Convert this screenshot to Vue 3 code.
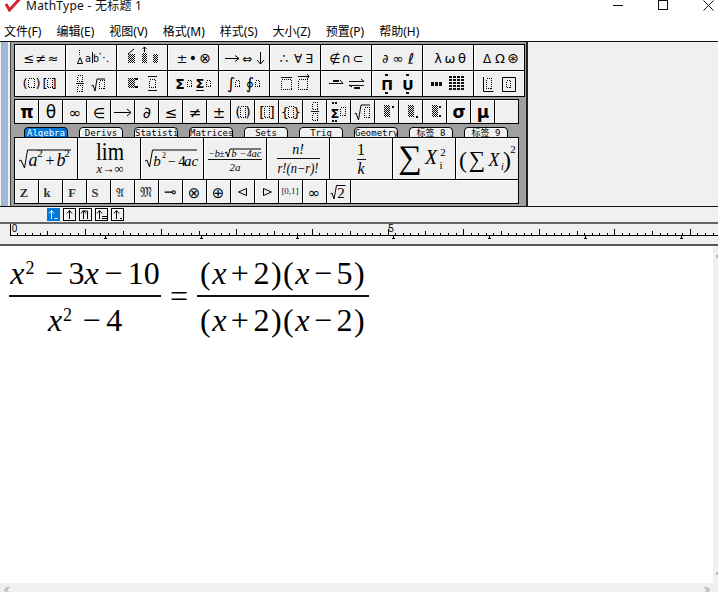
<script setup>
const T = (x, y, s, c = 'sym', fs = 13) => ({ x, y, s, c, fs })
const D = (x, y, w, h) => ({ x: x + 0.5, y: y + 0.5, w: w - 1, h: h - 1 })
const F = (x, y, w, h) => ({ x, y, w, h })
const ic = (t = [], d = [], f = [], p = '', g = []) => ({ t, d, f, p, g })

const row1 = [
  ic([T(14, 18, '≤'), T(26, 18, '≠'), T(38, 18, '≈')]),
  ic([T(22, 17, 'a', 'mono', 10), T(30, 17, 'b', 'mono', 10), T(38, 16, '⋱', 'sym', 11)], [], [F(13, 5, 1, 1), F(13, 7, 1, 1), F(13, 9, 1, 1)], 'M11.5 18.5h5l-2.500-6zM26.500 7v11'),
  ic([], [], [], 'M11 9l6-5M27.500 7V2M25.500 4l2-2 2 2', [F(11, 9, 7, 9), F(25, 8, 5, 10), F(36, 9, 5, 9)]),
  ic([T(14, 18, '±'), T(25, 18, '•', 'sym', 14), T(37, 18, '⊗', 'sym', 14)]),
  ic([T(28, 18, '⇔', 'sym', 12)], [], [], 'M6 13.500h14M16 10.500l4 3-4 3M41.500 7v12M38 15l3.500 4 3.500-4'),
  ic([T(14, 18, '∴'), T(28, 18, '∀', 'sym', 12), T(39, 18, '∃', 'sym', 12)]),
  ic([T(14, 18, '∉'), T(25, 18, '∩'), T(37, 18, '⊂')]),
  ic([T(13, 18, '∂', 'sym', 12), T(26, 18, '∞'), T(39, 19, 'ℓ', 'sym', 15)]),
  ic([T(15, 18, 'λ'), T(27, 18, 'ω'), T(39, 18, 'θ')]),
  ic([T(13, 18, 'Δ', 'sym', 12), T(26, 18, 'Ω'), T(39, 18, '⊛', 'sym', 14)]),
]
const row2 = [
  ic([T(10, 17, '(', 'sym', 13), T(23, 17, ')', 'sym', 13), T(30, 17, '[', 'sym', 13), T(39, 17, ']', 'sym', 13)], [D(13, 7, 7, 10), D(32, 7, 6, 10)]),
  ic([], [D(11, 4, 6, 7), D(11, 14, 6, 7), D(33, 9, 6, 9)], [F(10, 12, 8, 1)], 'M25.500 15l1.500-1 2 6 2-12h8'),
  ic([], [D(32, 8, 7, 9)], [F(31, 5, 9, 1), F(31, 19, 9, 1), F(18, 7, 3, 2), F(18, 15, 3, 2)], '', [F(11, 7, 7, 10)]),
  ic([T(12, 18, 'Σ', 'bsym', 14), T(32, 17, 'Σ', 'bsym', 13)], [D(19, 9, 5, 7), D(38, 9, 5, 7)], [F(28, 19, 8, 1)]),
  ic([T(12, 18, '∫', 'sym', 16), T(31, 18, '∮', 'sym', 16)], [D(16, 9, 5, 7), D(36, 9, 5, 7)]),
  ic([], [D(11, 8, 11, 11), D(28, 8, 10, 11)], [F(11, 6, 11, 1), F(28, 5, 11, 1)], 'M37 3l2 2.500-2 2.500'),
  ic([], [], [F(8, 12, 14, 1), F(28, 10, 15, 1), F(28, 14, 15, 1), F(12, 9, 6, 2), F(33, 16, 6, 2)], 'M19 9l3 3.500M40 8l3 2.500M31 16l-3-2'),
  ic([T(15, 19, 'Π', 'bsym', 14), T(36, 19, 'U', 'bsym', 14)], [], [F(13, 3, 3, 2), F(13, 21, 3, 2), F(34, 3, 3, 2), F(34, 21, 3, 2)]),
  ic([], [], [
    F(8, 11, 3, 4), F(12, 11, 3, 4), F(16, 11, 3, 4),
    ...[0, 1, 2, 3, 4].flatMap(r => [0, 1, 2, 3].map(c => F(26 + c * 4, 5 + r * 3, 3, 2))),
  ]),
  ic([], [D(12, 7, 6, 11), D(32, 9, 5, 8)], [], 'M9.500 6v14.500h10M28.500 6.500h13v14h-13z'),
]
const row3 = [
  ['π', 'bsym', 17], ['θ', 'sym', 17], ['∞', 'sym', 15], ['∈', 'sym', 14],
].map(([s, c, f]) => ic([T(12, 18, s, c, f)])).concat([
  ic([], [], [], 'M3 12.500h17M16 9l4 3.500-4 3.500'),
], [
  ['∂', 'sym', 16], ['≤', 'sym', 15], ['≠', 'sym', 15], ['±', 'sym', 15],
].map(([s, c, f]) => ic([T(12, 18, s, c, f)])), [
  ic([T(7, 17, '(', 'sym', 14), T(17, 17, ')', 'sym', 14)], [D(9, 6, 6, 12)]),
  ic([T(7, 17, '[', 'sym', 14), T(17, 17, ']', 'sym', 14)], [D(9, 6, 6, 12)]),
  ic([T(6, 17, '{', 'sym', 13), T(18, 17, '}', 'sym', 13)], [D(9, 6, 6, 12)]),
  ic([], [D(9, 2, 6, 8), D(9, 13, 6, 8)], [F(8, 11, 8, 1)]),
  ic([T(8, 18, 'Σ', 'bsym', 13)], [D(13, 7, 6, 9)], [F(5, 2, 2, 2), F(8, 2, 2, 2), F(5, 20, 2, 2), F(8, 20, 2, 2)]),
  ic([], [D(13, 7, 6, 11)], [], 'M3.500 14l1.500-1 2.500 7 2.500-15h9'),
  ic([], [], [F(17, 6, 2, 2)], '', [F(9, 5, 6, 12)]),
  ic([], [], [F(17, 16, 2, 2)], '', [F(9, 5, 6, 12)]),
  ic([], [], [F(16, 6, 2, 2), F(16, 15, 2, 2)], '', [F(9, 5, 6, 12)]),
  ic([T(12, 18, 'σ', 'bsym', 17)]),
  ic([T(12, 18, 'μ', 'bsym', 17)]),
  ic(),
])
const tabs = ['Algebra', 'Derivs', 'Statisti', 'Matrices', 'Sets', 'Trig', 'Geometry', '标签 8', '标签 9']

const row5 = [
  ic([T(9, 17, 'Z', 'bser', 12.500)]), ic([T(8, 17, 'k', 'bser', 12.500)]), ic([T(9, 17, 'F', 'bser', 12.500)]), ic([T(8, 17, 'S', 'bser', 12.500)]),
  ic([T(9, 17, '𝔄', 'ser', 12)]), ic([T(11, 17, '𝔐', 'ser', 13)]),
  ic([T(11, 17, '⊸', 'sym', 15)]), ic([T(11, 18, '⊗', 'sym', 15)]), ic([T(11, 18, '⊕', 'sym', 15)]),
  ic([], [], [], 'M15.500 8.500v7l-8-3.500z'), ic([], [], [], 'M8.500 8.500v7l8-3.500z'),
  ic([T(11, 14, '[0,1]', 'ser1', 9)]), ic([T(11, 18, '∞', 'sym', 15)]),
  ic([T(14, 18, '2', 'mn', 15)], [], [], 'M3.500 14l1.500-1 2 6 2.500-13.500h9'),
]

const ticks = ['M10 11.500h708']
for (let i = 0; i * 7.56 + 9.5 < 718; i++) {
  const x = Math.round(9.5 + i * 7.56) + 0.5
  const h = i === 0 ? 11 : i % 10 === 0 ? 6 : i % 5 === 0 ? 4 : 2
  ticks.push(`M${x} 11v-${h}`)
}
const stops = []
for (let x = 105; x < 718; x += 96) stops.push(`M${x + 0.5} 12v2M${x - 1} 14.5h3`)
const rulerPath = ticks.join('') + stops.join('')
</script>

<template>
  <div class="app">
    <svg class="defs" width="0" height="0">
      <pattern id="dith" width="2" height="2" patternUnits="userSpaceOnUse">
        <rect width="1" height="1" fill="#000" />
        <rect x="1" y="1" width="1" height="1" fill="#000" />
      </pattern>
    </svg>
    <header class="titlebar">
      <svg class="logo" width="20" height="12" viewBox="0 0 20 12"><path d="M3 4l3.500 6 10-11" fill="none" stroke="#d3252f" stroke-width="3"/></svg>
      <span class="title">MathType - 无标题 1</span>
      <span class="controls">
        <svg width="10" height="11"><path d="M0 5.500h10" stroke="#111"/></svg>
        <svg width="10" height="11"><rect x=".5" y=".5" width="9" height="9" fill="none" stroke="#111"/></svg>
        <svg width="11" height="11"><path d="M.5 .5l10 10M10.500 .5l-10 10" stroke="#111"/></svg>
      </span>
    </header>
    <nav class="menubar">
      <span>文件(F)</span><span>编辑(E)</span><span>视图(V)</span><span>格式(M)</span><span>样式(S)</span><span>大小(Z)</span><span>预置(P)</span><span>帮助(H)</span>
    </nav>

    <section class="toolbar">
      <div class="strip"></div>
      <div class="palette">
        <div class="grid g51">
          <div v-for="(b, i) in [...row1, ...row2]" :key="i" class="btn">
            <svg width="50" height="25">
              <rect v-for="(r, j) in b.g" :key="'g' + j" :x="r.x" :y="r.y" :width="r.w" :height="r.h" class="gray" />
              <rect v-for="(r, j) in b.f" :key="'f' + j" :x="r.x" :y="r.y" :width="r.w" :height="r.h" class="solid" />
              <rect v-for="(r, j) in b.d" :key="'d' + j" :x="r.x" :y="r.y" :width="r.w" :height="r.h" class="dot" />
              <path v-if="b.p" :d="b.p" class="line" />
              <text v-for="(t, j) in b.t" :key="'t' + j" :x="t.x" :y="t.y" :class="t.c" :font-size="t.fs">{{ t.s }}</text>
            </svg>
          </div>
        </div>
        <div class="grid g24 r3">
          <div v-for="(b, i) in row3" :key="i" class="btn">
            <svg width="23" height="24">
              <rect v-for="(r, j) in b.g" :key="'g' + j" :x="r.x" :y="r.y" :width="r.w" :height="r.h" class="gray" />
              <rect v-for="(r, j) in b.f" :key="'f' + j" :x="r.x" :y="r.y" :width="r.w" :height="r.h" class="solid" />
              <rect v-for="(r, j) in b.d" :key="'d' + j" :x="r.x" :y="r.y" :width="r.w" :height="r.h" class="dot" />
              <path v-if="b.p" :d="b.p" class="line" />
              <text v-for="(t, j) in b.t" :key="'t' + j" :x="t.x" :y="t.y" :class="t.c" :font-size="t.fs">{{ t.s }}</text>
            </svg>
          </div>
        </div>
        <div class="tabs">
          <div v-for="(t, i) in tabs" :key="t" class="tab" :class="{ active: i === 0 }"><span>{{ t }}</span></div>
        </div>
        <div class="grid g63">
          <div class="btn tpl"><svg width="62" height="41">
            <path d="M4 23l2-1 3.500 8 3-18h43.500" class="line" />
            <text x="18" y="28" class="mi" font-size="18">a</text><text x="25" y="19" class="mn" font-size="11">2</text>
            <text x="35" y="28" class="mn" font-size="16">+</text><text x="46" y="28" class="mi" font-size="18">b</text><text x="52" y="19" class="mn" font-size="11">2</text>
          </svg></div>
          <div class="btn tpl"><svg width="62" height="41">
            <text x="32" y="22" class="mn" font-size="25" textLength="28" lengthAdjust="spacingAndGlyphs">lim</text>
            <text x="32" y="35" class="mi" font-size="13" textLength="27" lengthAdjust="spacingAndGlyphs">x→∞</text>
          </svg></div>
          <div class="btn tpl"><svg width="62" height="41">
            <path d="M4 23l2-1 2.500 7 3-17h44.500" class="line" />
            <text x="16" y="28" class="mi" font-size="15">b</text><text x="23" y="20" class="mn" font-size="8">2</text>
            <text x="31" y="28" class="mn" font-size="14">−</text><text x="41" y="28" class="mn" font-size="15">4</text><text x="50" y="28" class="mi" font-size="15">ac</text>
          </svg></div>
          <div class="btn tpl"><svg width="62" height="41">
            <path d="M21 15l1.500-1 1.500 5 2-8h31" class="line" />
            <text x="10" y="19" class="mi" font-size="10">−b</text>
            <text x="18" y="19" class="mn" font-size="10">±</text>
            <text x="30" y="19" class="mi" font-size="10">b</text>
            <text x="39" y="19" class="mn" font-size="10">−</text>
            <text x="50" y="19" class="mi" font-size="10">4ac</text>
            <rect x="4" y="21" width="54" height="1" class="solid" />
            <text x="31" y="33" class="mi" font-size="11">2a</text>
          </svg></div>
          <div class="btn tpl"><svg width="62" height="41">
            <text x="31" y="16" class="mi" font-size="14">n!</text>
            <rect x="10" y="20" width="43" height="1" class="solid" />
            <text x="31" y="35" class="mi" font-size="14" textLength="41" lengthAdjust="spacingAndGlyphs">r!(n−r)!</text>
          </svg></div>
          <div class="btn tpl"><svg width="62" height="41">
            <text x="31" y="17" class="mn" font-size="16">1</text>
            <rect x="27" y="21" width="9" height="1" class="solid" />
            <text x="31" y="36" class="mi" font-size="16">k</text>
          </svg></div>
          <div class="btn tpl"><svg width="62" height="41">
            <text x="17" y="30" class="mn" font-size="33">∑</text>
            <text x="38" y="26" class="mi" font-size="20">X</text>
            <text x="50" y="18" class="mn" font-size="11">2</text><text x="48" y="31" class="mn" font-size="11">i</text>
          </svg></div>
          <div class="btn tpl"><svg width="62" height="41">
            <text x="7" y="30" class="mn" font-size="24">(</text>
            <text x="21" y="29" class="mn" font-size="23">∑</text>
            <text x="38" y="28" class="mi" font-size="18">X</text>
            <text x="46.500" y="32" class="mi" font-size="10">i</text>
            <text x="51" y="30" class="mn" font-size="24">)</text>
            <text x="57" y="15" class="mn" font-size="11">2</text>
          </svg></div>
        </div>
        <div class="grid g24 r5">
          <div v-for="(b, i) in row5" :key="i" class="btn">
            <svg width="23" height="23">
              <path v-if="b.p" :d="b.p" class="line" />
              <text v-for="(t, j) in b.t" :key="'t' + j" :x="t.x" :y="t.y" :class="t.c" :font-size="t.fs">{{ t.s }}</text>
            </svg>
          </div>
          <div class="btn wide"></div>
        </div>
      </div>
      <div class="toolrest"></div>
    </section>

    <div class="sizes">
      <span class="nudge on"><svg width="11" height="11"><path d="M3.500 10V2M1 4.500l2.500-3 2.500 3M6.500 9.500h3" fill="none" stroke="#fff"/></svg></span>
      <span class="nudge"><svg width="11" height="11"><path d="M5.500 10V2M3 4.500l2.500-3 2.500 3" fill="none" stroke="#000"/></svg></span>
      <span class="nudge"><svg width="11" height="11"><path d="M3.500 10V2h4M1 4.500l2.500-3 2.500 3M7.500 2v8" fill="none" stroke="#000"/></svg></span>
      <span class="nudge"><svg width="11" height="11"><path d="M3.500 10V2M1 4.500l2.500-3 2.500 3M6 7.500h5M6 9.500h5" fill="none" stroke="#000"/></svg></span>
      <span class="nudge"><svg width="11" height="11"><path d="M4.500 10V2M2 4.500l2.500-3 2.500 3M8 9.500h2" fill="none" stroke="#000"/></svg></span>
    </div>

    <div class="ruler">
      <svg width="718" height="20">
        <path :d="rulerPath" class="line" />
        <text x="14.500" y="7.500" class="rnum" font-size="10">0</text>
        <text x="391" y="7.500" class="rnum" font-size="10">5</text>
      </svg>
    </div>

    <div class="editor">
      <main class="doc">
        <div class="math">
          <div class="frac f1">
            <div class="num"><i>x</i><sup>2</sup><b>−</b>3<i>x</i><b>−</b>10</div>
            <div class="den"><i>x</i><sup>2</sup><b>−</b>4</div>
          </div>
          <span class="eq">=</span>
          <div class="frac f2">
            <div class="num">(<i>x</i><b class="t">+</b>2)(<i>x</i><b class="t">−</b>5)</div>
            <div class="den">(<i>x</i><b class="t">+</b>2)(<i>x</i><b class="t">−</b>2)</div>
          </div>
        </div>
      </main>
      <aside class="vscroll"><span class="mark"></span><span class="mark"></span></aside>
    </div>
    <footer class="hscroll">
      <svg width="8" height="9"><path d="M6.500 4l-3 3 2 2M4.500 4l-3 3 2 2" fill="none" stroke="#bbb" stroke-width="1.2"/></svg>
      <svg width="8" height="9"><path d="M1.500 4l3 3-2 2M3.500 4l3 3-2 2" fill="none" stroke="#bbb" stroke-width="1.2"/></svg>
    </footer>
  </div>
</template>

<style scoped>
.app { width: 718px; height: 592px; overflow: hidden; display: flex; flex-direction: column; background: #fff; color: #000; font-family: "Noto Sans", "Noto Sans CJK SC", sans-serif; position: relative; }
.defs { position: absolute; }
.titlebar { height: 20px; flex: none; display: flex; align-items: flex-start; }
.logo { margin-left: 3px; flex: none; }
.title { margin-left: 3px; font-size: 12px; line-height: 12px; letter-spacing: .25px; color: #111; }
.controls { margin-left: auto; display: flex; align-items: flex-start; gap: 35px; margin-right: 4px; height: 12px; }
.controls svg { display: block; }
.menubar { flex: none; display: flex; gap: 15px; padding-left: 4px; font-size: 12px; line-height: 23px; border-bottom: 1px solid #111; box-sizing: border-box; height: 22px; }
.toolbar { height: 165px; flex: none; display: flex; background: #f0f0f0; border-bottom: 1px solid #111; box-sizing: border-box; }
.strip { width: 7px; margin-left: 1px; background: #9fb8d4; margin-right: 2px; }
.palette { width: 518px; flex: none; box-sizing: border-box; background: #a0a0a0; border-left: 1px solid #444; border-right: 2px solid #222; padding: 2px 0 2px 3px; }
.toolrest { flex: 1; }
.grid { display: grid; border-top: 1px solid #000; border-left: 1px solid #000; width: max-content; }
.g51 { grid-template-columns: repeat(10, 51px); grid-auto-rows: 26px; }
.g24 { grid-template-columns: repeat(21, 24px); }
.r3 { margin-top: 2px; grid-auto-rows: 24px; }
.r5 { border-top: 0; grid-auto-rows: 24px; }
.g63 { grid-template-columns: repeat(8, 63px); grid-auto-rows: 42px; }
.btn { background: #f0f0f0; border-right: 1px solid #000; border-bottom: 1px solid #000; box-sizing: border-box; box-shadow: inset 1px 1px 0 #fff; }
.btn svg { display: block; }
.wide { grid-column: span 7; }
.tabs { display: flex; gap: 11px; padding-left: 10px; margin-top: 3px; height: 10px; overflow: hidden; }
.tab { width: 44px; height: 12px; box-sizing: border-box; background: #f0f0f0; border: 1px solid #000; border-radius: 4px 4px 0 0; font: 9px/11px "DejaVu Sans Mono", "Noto Sans CJK SC", monospace; text-align: center; white-space: nowrap; overflow: hidden; flex: none; box-shadow: inset 1px 1px 0 #fff; }
.tab.active { background: #0078d7; color: #fff; box-shadow: none; }
.sizes { height: 15px; flex: none; background: #f0f0f0; display: flex; gap: 3px; padding: 1px 0 0 47px; box-sizing: border-box; }
.nudge { width: 13px; height: 13px; box-sizing: border-box; border: 1px solid #000; background: #f0f0f0; box-shadow: inset 1px 1px 0 #fff; }
.nudge.on { background: #0078d7; border-color: #0078d7; box-shadow: none; }
.nudge svg { display: block; }
.ruler { height: 24px; flex: none; box-sizing: border-box; background: #f0f0f0; border-top: 2px solid #666; border-bottom: 2px solid #555; }
.ruler svg { display: block; }
.editor { flex: 1; display: flex; min-height: 0; }
.doc { flex: 1; padding: 4px 0 0 9px; }
.vscroll { width: 5px; background: #f0f0f0; display: flex; flex-direction: column; align-items: flex-end; justify-content: space-between; padding: 9px 0 8px; box-sizing: border-box; }
.mark { width: 2px; height: 3px; background: #bbb; }
.hscroll { height: 9px; flex: none; background: #f0f0f0; display: flex; justify-content: space-between; padding: 0 7px 0 3px; overflow: hidden; }
.hscroll svg { display: block; }
.math { display: flex; align-items: center; font-family: "Liberation Serif", serif; font-size: 32px; line-height: 46px; width: max-content; }
.frac { display: flex; flex-direction: column; align-items: center; }
.f1 { width: 152px; }
.f2 { width: 172px; letter-spacing: 1.500px; }
.num { border-bottom: 2px solid #111; width: 100%; text-align: center; white-space: nowrap; height: 45px; }
.den { white-space: nowrap; text-align: center; height: 46px; }
.math i { font-style: italic; }
.math sup { font-size: 18px; line-height: 0; vertical-align: 10px; margin-left: 1px; margin-right: 5px; }
.math b { font-weight: normal; margin: 0 5.500px; }
.math b.t { margin: 0 3px; }
.eq { margin: 0 9px 2px 9px; }
.solid { fill: #111; }
.gray { fill: url(#dith); }
.dot { fill: none; stroke: #000; stroke-dasharray: 1 1; shape-rendering: crispEdges; }
.line { fill: none; stroke: #000; stroke-width: 1; }
text { text-anchor: middle; fill: #000; }
.sym { font-family: "DejaVu Sans", sans-serif; }
.bsym { font-family: "DejaVu Sans", sans-serif; font-weight: bold; }
.mono { font-family: "DejaVu Sans Mono", monospace; }
.ser { font-family: "DejaVu Serif", serif; fill: #222; }
.ser1 { font-family: "Liberation Serif", serif; fill: #102040; }
.bser { font-family: "Liberation Serif", serif; font-weight: bold; fill: #333; }
.mi { font-family: "Liberation Serif", serif; font-style: italic; }
.mn { font-family: "Liberation Serif", "DejaVu Sans", serif; }
.rnum { font-family: "Liberation Sans", sans-serif; }
</style>
